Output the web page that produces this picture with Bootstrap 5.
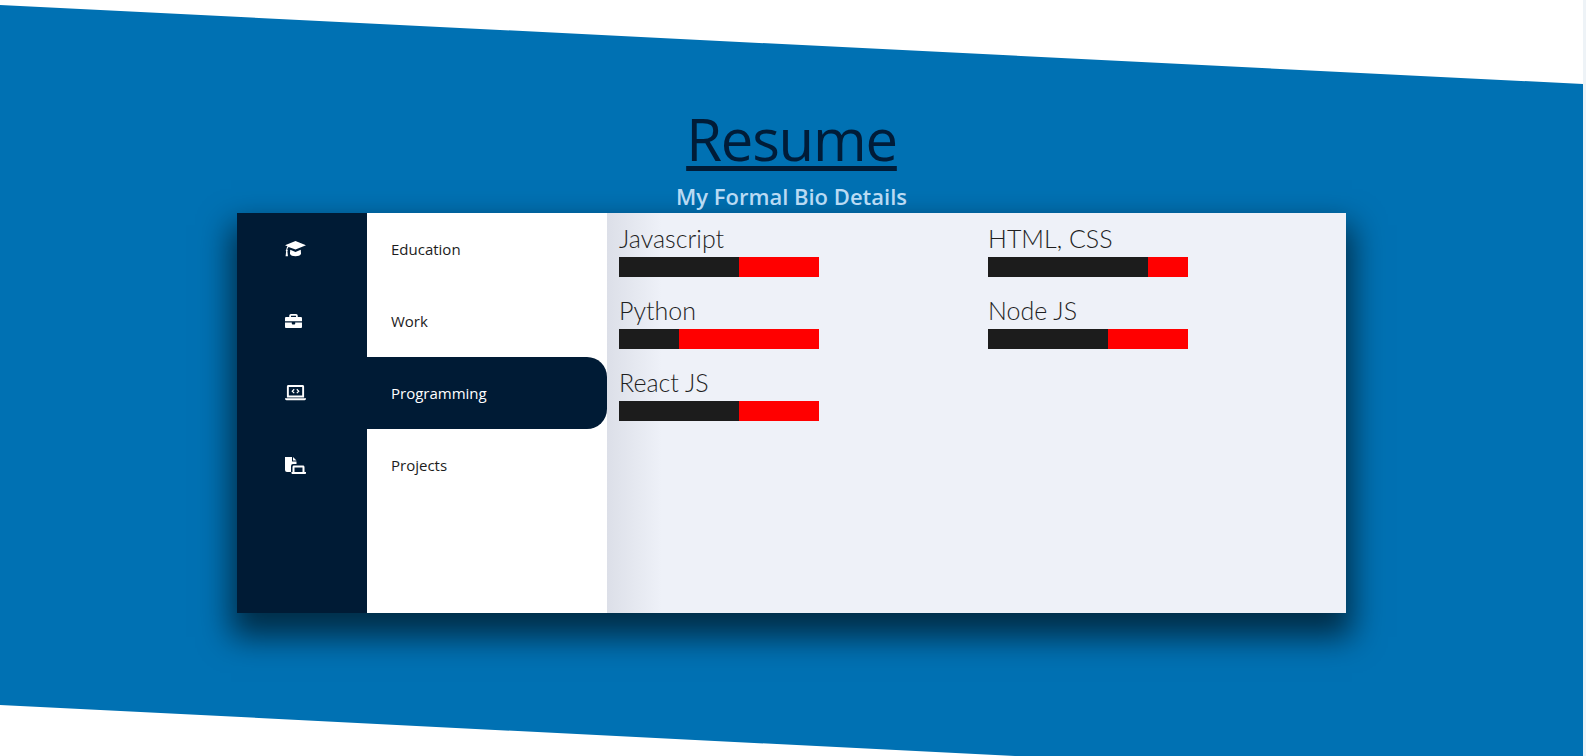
<!DOCTYPE html>
<html lang="en">
<head>
    <meta charset="UTF-8">
    <title>Resume</title>
    <link href="https://cdn.jsdelivr.net/npm/bootstrap@5.3.0/dist/css/bootstrap.min.css" rel="stylesheet">
    <script src="https://cdn.jsdelivr.net/npm/bootstrap@5.3.0/dist/js/bootstrap.bundle.min.js"></script>
    <style>
        html, body { height: 100%; }
        body {
            background: #fff;
            overflow: hidden;
            font-family: "Open Sans", "Noto Sans", sans-serif;
        }

        /* Blue slanted section */
        .resume-section {
            width: 1583px;
            height: 756px;
            background: #0071b3;
            clip-path: polygon(0 5px, 100% 84px, 100% 100%, 1015px 100%, 0 705px);
            padding-top: 104px;
        }
        .page-edge { width: 3px; background: #eef3f7; }

        .resume-title {
            font-size: 58px;
            font-weight: 400;
            line-height: 70px;
            letter-spacing: -1.2px;
            color: #001c38;
            text-decoration: underline;
            text-decoration-thickness: 5px;
            text-underline-offset: 5px;
            margin: 0;
        }
        .resume-sub {
            font-size: 22px;
            font-weight: 600;
            line-height: 24px;
            color: #b9daf3;
            margin: 10px 0 5px;
        }

        /* Main card */
        .resume-box {
            width: 1109px;
            height: 400px;
            margin-left: 237px;
            box-shadow: 0 18px 30px 6px rgba(0, 0, 0, .6);
        }
        .icon-rail { width: 130px; background: #001b35; }
        .icon-cell { height: 72px; padding-left: 48px; color: #fff; }
        .icon-cell svg { height: auto; fill: currentColor; }
        .menu-col { width: 240px; background: #fff; }
        .menu-row {
            height: 72px;
            padding-left: 24px;
            font-size: 15px;
            color: #1c1c1c;
        }
        .menu-row.is-active {
            background: #001b35;
            color: #fff;
            border-radius: 0 20px 20px 0;
        }
        .skills-pane {
            background: linear-gradient(to right, #dcdfe8, #eef1f8 55px);
            padding: 9px 12px;
        }
        .skill-grid {
            display: grid;
            grid-template-columns: 369px 1fr;
            row-gap: 17px;
        }
        .skill-name {
            font-family: "Lato", sans-serif;
            font-size: 25px;
            font-weight: 300;
            line-height: 33px;
            margin-bottom: 2px;
            color: #1f1f1f;
        }
        .skill-bar { width: 200px; height: 20px; background: #ff0000; }
        .skill-fill { height: 100%; background: #1c1c1c; }
    </style>
</head>
<body>
    <div class="d-flex">
        <section class="resume-section">
            <div class="text-center">
                <h1 class="resume-title">Resume</h1>
                <p class="resume-sub">My Formal Bio Details</p>
            </div>

            <div class="resume-box d-flex">
                <div class="icon-rail">
                    <div class="icon-cell d-flex align-items-center">
                        <svg width="21" viewBox="1 4 22 16"><path d="M12 4 1 8.500l2.600 1.100c-.7.900-1.100 2-1.200 3.300-.4.300-.6.600-.6 1 0 .3.200.7.400.9L1.600 20h2.500l-.6-5.200c.3-.2.400-.5.400-.8 0-.4-.2-.7-.5-.9.100-1.100.6-2.100 1.300-2.800L12 13l11-4.500L12 4z"/><path d="M6.500 13.200 6.200 17c0 1.700 2.600 3 5.800 3s5.800-1.300 5.800-3l-.3-3.800L12 15.400l-5.500-2.200z"/></svg>
                    </div>
                    <div class="icon-cell d-flex align-items-center">
                        <svg width="17" viewBox="2 3.500 20 17"><path d="M9 3.500h6c1.100 0 2 .9 2 2V7h3.500C21.400 7 22 7.600 22 8.500V12H2V8.500C2 7.600 2.600 7 3.500 7H7V5.500c0-1.100.9-2 2-2zM9 5.500V7h6V5.500H9z" fill-rule="evenodd"/><path d="M2 13.500h8V15c0 .6.400 1 1 1h2c.6 0 1-.4 1-1v-1.500h8v5c0 1.100-.9 2-2 2H4c-1.100 0-2-.9-2-2v-5z"/></svg>
                    </div>
                    <div class="icon-cell d-flex align-items-center">
                        <svg width="21" viewBox="1 4 22 16"><path fill-rule="evenodd" d="M4.500 4h15c.8 0 1.500.7 1.500 1.500V17H3V5.500C3 4.700 3.700 4 4.500 4zM5 6v9h14V6H5z"/><path d="M1 18h22v.5c0 .8-.7 1.500-1.500 1.500h-19C1.700 20 1 19.300 1 18.500V18z"/><path d="M10.200 8 7.700 10.500 10.200 13l.9-.9-1.600-1.600 1.600-1.600-.9-.9zM13.800 8l-.9.900 1.600 1.600-1.600 1.600.9.900 2.500-2.500L13.800 8z"/></svg>
                    </div>
                    <div class="icon-cell d-flex align-items-center">
                        <svg width="21" viewBox="2 3 21 17"><path d="M2 3h7v4.500h4.500V10H10a2 2 0 0 0-2 2v6H4a2 2 0 0 1-2-2V3z"/><path d="M10 3l3.500 3.500H10V3z"/><path fill-rule="evenodd" d="M11 11.500h9c.8 0 1.500.7 1.500 1.500v5H23v1c0 .6-.4 1-1 1H9.500c-.6 0-1-.4-1-1v-1H9.500v-5c0-.8.7-1.500 1.500-1.500zm.5 2v4.500h8v-4.500h-8z"/></svg>
                    </div>
                </div>

                <div class="menu-col">
                    <div class="menu-row d-flex align-items-center">Education</div>
                    <div class="menu-row d-flex align-items-center">Work</div>
                    <div class="menu-row is-active d-flex align-items-center">Programming</div>
                    <div class="menu-row d-flex align-items-center">Projects</div>
                </div>

                <div class="skills-pane flex-grow-1">
                    <div class="skill-grid">
                        <div>
                            <div class="skill-name">Javascript</div>
                            <div class="skill-bar"><div class="skill-fill" style="width: 60%"></div></div>
                        </div>
                        <div>
                            <div class="skill-name">HTML, CSS</div>
                            <div class="skill-bar"><div class="skill-fill" style="width: 80%"></div></div>
                        </div>
                        <div>
                            <div class="skill-name">Python</div>
                            <div class="skill-bar"><div class="skill-fill" style="width: 30%"></div></div>
                        </div>
                        <div>
                            <div class="skill-name">Node JS</div>
                            <div class="skill-bar"><div class="skill-fill" style="width: 60%"></div></div>
                        </div>
                        <div>
                            <div class="skill-name">React JS</div>
                            <div class="skill-bar"><div class="skill-fill" style="width: 60%"></div></div>
                        </div>
                    </div>
                </div>
            </div>
        </section>
        <div class="page-edge"></div>
    </div>
</body>
</html>
